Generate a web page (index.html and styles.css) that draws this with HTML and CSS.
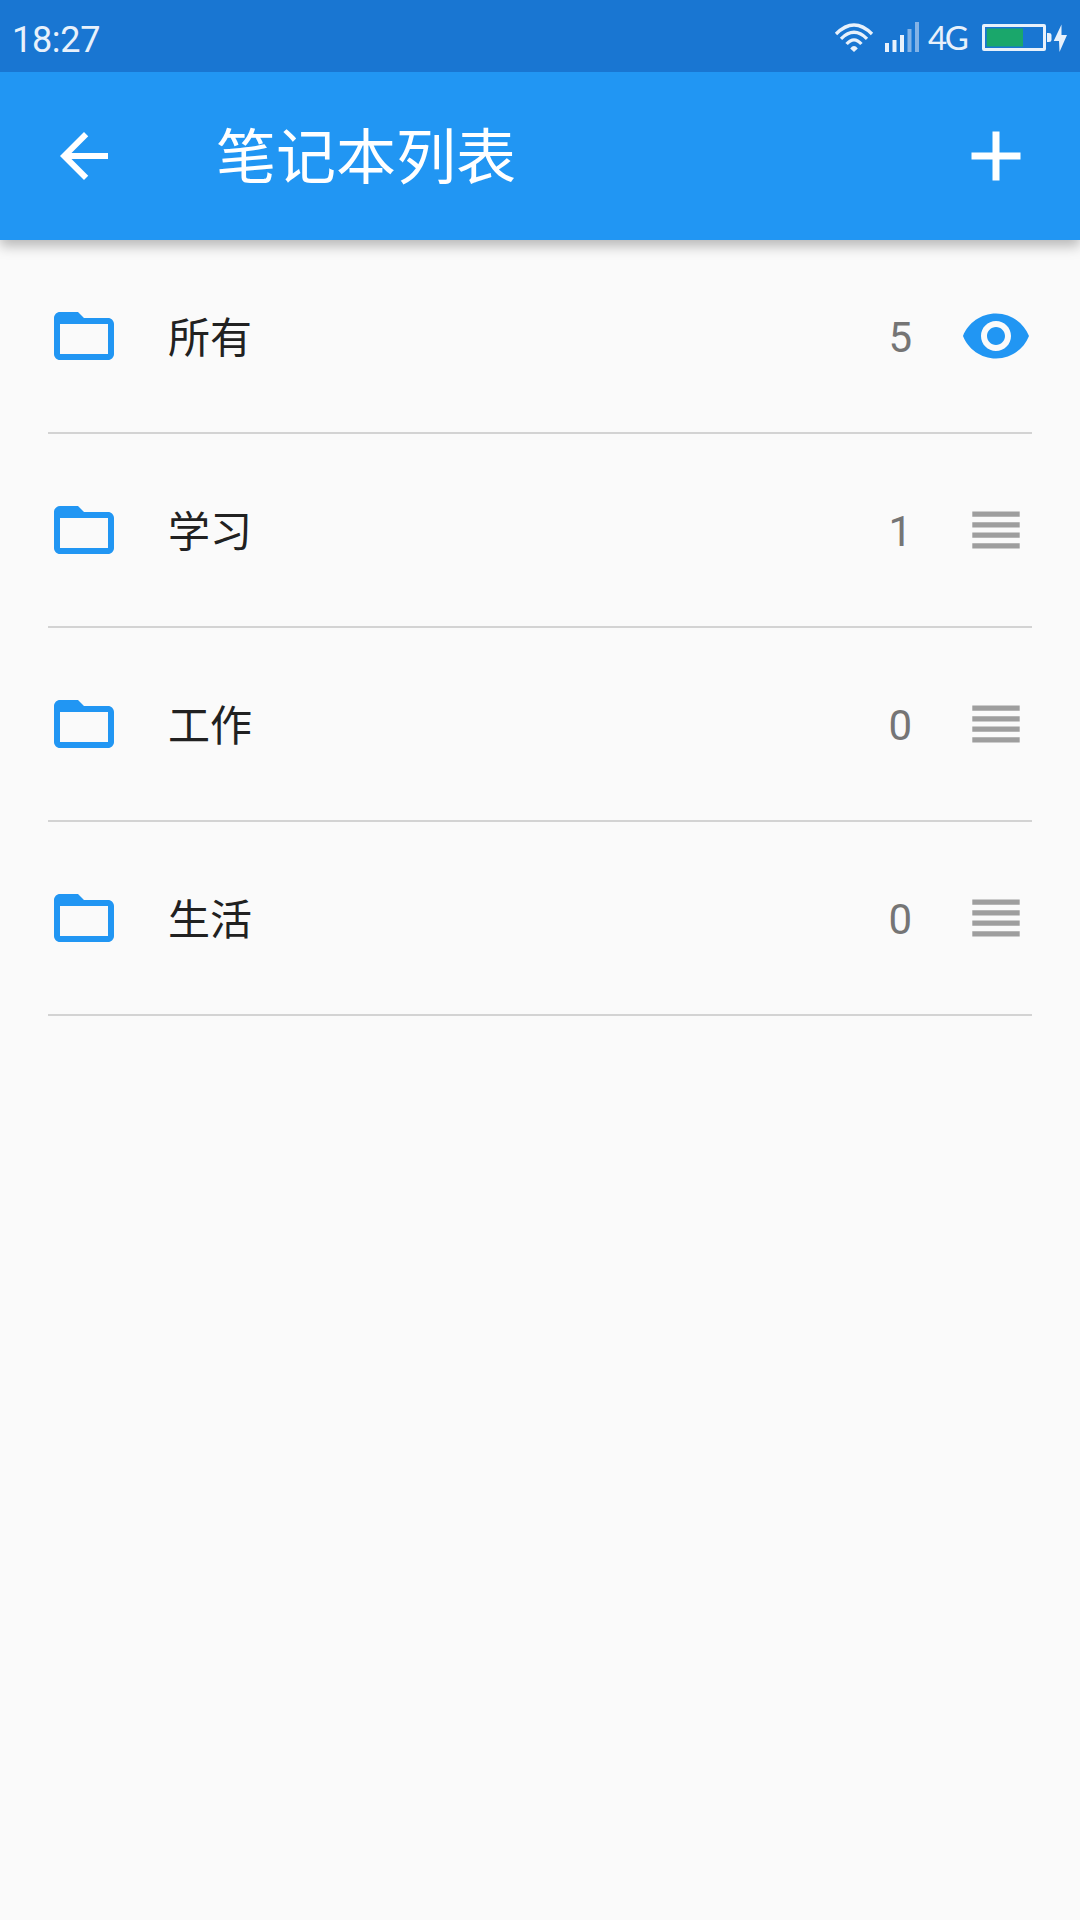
FILE: index.html
```html
<!DOCTYPE html>
<html lang="zh-CN">
<head>
  <meta charset="UTF-8" />
  <title>笔记本列表</title>
  <meta name="viewport" content="width=device-width, initial-scale=1.0"/>
  <link rel="stylesheet" href="styles.css">
</head>
<body>
  <!-- shared icons -->
  <svg class="sprite" width="0" height="0">
    <symbol id="folder" viewBox="0 0 24 24">
      <path d="M10 4H4c-1.100 0-2 .9-2 2v12c0 1.100.9 2 2 2h16c1.100 0 2-.9 2-2V8c0-1.100-.9-2-2-2h-8l-2-2zm10 14H4V8h16v10z"/>
    </symbol>
    <symbol id="handle" viewBox="0 0 72 72">
      <path d="M12.300 17.500h47.400v5.300H12.300zM12.300 28.300h47.400v5.300H12.300zM12.300 38.500h47.400v5.300H12.300zM12.300 49.300h47.400v5.300H12.300z"/>
    </symbol>
  </svg>

  <div class="status-bar">
    <span class="time">18:27</span>
    <div class="status-icons">
      <svg class="wifi" width="40" height="32" viewBox="0 0 40 32">
        <g fill="none" stroke="#e8f1fb" stroke-width="3.300">
          <path d="M2 12Q20-6 38 12"/>
          <path d="M7 16.800Q20 3.800 33 16.800"/>
          <path d="M12.600 22Q20 13.600 27.400 22"/>
        </g>
        <path fill="#e8f1fb" d="M20 30l-3.800-3.600q3.800-4.600 7.600 0z"/>
      </svg>
      <svg class="signal" width="34" height="30" viewBox="0 0 34 30">
        <path fill="#e8f1fb" d="M0 21h4v9H0zM7.500 18h4v12h-4zM15 13h4v17h-4z"/>
        <path fill="#84b3e6" d="M22.500 7h4v23h-4zM30 0h4v30h-4z"/>
      </svg>
      <span class="network">4G</span>
      <svg class="battery" width="86" height="28" viewBox="0 0 86 28">
        <rect x="1.500" y="1.500" width="61" height="24" rx="0.500" fill="none" stroke="#e8f1fb" stroke-width="3"/>
        <rect x="4.700" y="4.500" width="36.300" height="18" fill="#1aa76b"/>
        <path fill="#e8f1fb" d="M65 9h2q2.500 0 2.500 2v5q0 2-2.500 2h-2zM79.500 0.500l-7.800 16.500h5.300l0.500 11 7.500-17h-5.500z"/>
      </svg>
    </div>
  </div>

  <header class="app-bar">
    <svg class="back" width="72" height="72" viewBox="0 0 24 24">
      <path d="M20 11H7.830l5.590-5.590L12 4l-8 8 8 8 1.410-1.410L7.830 13H20v-2z"/>
    </svg>
    <h1>笔记本列表</h1>
    <svg class="add" width="84" height="84" viewBox="0 0 24 24">
      <path d="M19 13h-6v6h-2v-6H5v-2h6V5h2v6h6v2z"/>
    </svg>
  </header>

  <ul class="notebooks">
    <li>
      <svg class="icon folder"><use href="#folder"/></svg>
      <span class="name">所有</span>
      <span class="count">5</span>
      <svg class="icon eye" viewBox="0 0 24 24">
        <path d="M12 4.500C7 4.500 2.730 7.610 1 12c1.730 4.390 6 7.500 11 7.500s9.270-3.110 11-7.500c-1.730-4.390-6-7.500-11-7.500zM12 17c-2.760 0-5-2.240-5-5s2.240-5 5-5 5 2.240 5 5-2.240 5-5 5zm0-8c-1.660 0-3 1.340-3 3s1.340 3 3 3 3-1.340 3-3-1.340-3-3-3z"/>
      </svg>
    </li>
    <li>
      <svg class="icon folder"><use href="#folder"/></svg>
      <span class="name">学习</span>
      <span class="count">1</span>
      <svg class="icon handle"><use href="#handle"/></svg>
    </li>
    <li>
      <svg class="icon folder"><use href="#folder"/></svg>
      <span class="name">工作</span>
      <span class="count">0</span>
      <svg class="icon handle"><use href="#handle"/></svg>
    </li>
    <li>
      <svg class="icon folder"><use href="#folder"/></svg>
      <span class="name">生活</span>
      <span class="count">0</span>
      <svg class="icon handle"><use href="#handle"/></svg>
    </li>
  </ul>
</body>
</html>
```
FILE: styles.css
```css
* {
  box-sizing: border-box;
}
body {
  margin: 0;
  min-height: 1920px;
  background: #fafafa;
  color: #212121;
  font-family: Roboto, 'Noto Sans CJK SC', sans-serif;
}
svg {
  display: block;
  flex-shrink: 0;
}
.sprite {
  display: none;
}
.status-bar {
  position: relative;
  z-index: 1;
  display: flex;
  justify-content: space-between;
  height: 72px;
  padding: 0 12px;
  background: #1976d2;
  color: #e8f1fb;
}
.time {
  font-size: 36px;
  line-height: 80px;
  letter-spacing: -0.3px;
}
.status-icons {
  display: flex;
  align-items: flex-start;
  padding-top: 22px;
}
.signal {
  margin-left: 11px;
}
.network {
  width: 39px;
  margin: 0 15px 0 9px;
  font-family: Lato, sans-serif;
  font-size: 33px;
  line-height: 30px;
  letter-spacing: -2.5px;
}
.battery {
  margin-top: 2px;
}
.app-bar {
  position: relative;
  display: flex;
  align-items: center;
  height: 168px;
  padding: 0 42px 0 48px;
  background: #2196f3;
  box-shadow: 0 6px 12px rgba(0,0,0,0.27);
  color: #fff;
}
.app-bar svg {
  fill: #fff;
}
.app-bar h1 {
  flex: 1;
  margin: 0 0 0 96px;
  padding-top: 6px;
  font-size: 60px;
  font-weight: 400;
  line-height: 80px;
}
.notebooks {
  margin: 0;
  padding: 0 48px;
  list-style: none;
}
.notebooks li {
  display: flex;
  align-items: center;
  height: 194px;
  border-bottom: 2px solid #d3d3d3;
  font-size: 42px;
  line-height: 60px;
}
.icon {
  width: 72px;
  height: 72px;
}
.folder, .eye {
  fill: #2196f3;
}
.handle {
  fill: #9e9e9e;
}
.name {
  flex: 1;
  margin-left: 48px;
  padding-top: 6px;
}
.count {
  margin-right: 48px;
  padding-top: 4px;
  color: #757575;
}
```
